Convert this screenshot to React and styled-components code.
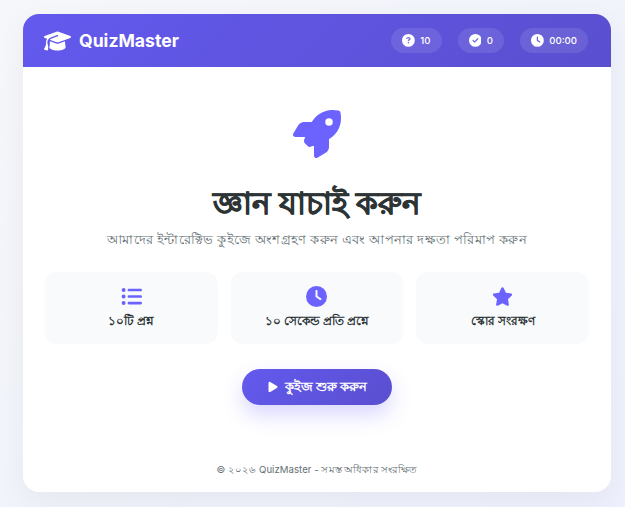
import React from "react";
import styled, { createGlobalStyle } from "styled-components";
import { FaGraduationCap, FaCircleQuestion, FaCircleCheck, FaClock, FaRocket, FaListUl, FaStar, FaPlay } from "react-icons/fa6";

const Global = createGlobalStyle`
  html, body { margin: 0; padding: 0; }
  body {
    font-family: Inter, "Noto Sans", sans-serif;
    background: linear-gradient(135deg, #f5f7fa 0%, #eef0fd 100%);
    min-height: 507px;
  }
  * { box-sizing: border-box; }
`;

const Page = styled.div`
  height: 507px;
  padding: 14px 14px 15px 23px;
  overflow: hidden;
`;
const Card = styled.div`
  width: 588px;
  height: 478px;
  background: #fff;
  border-radius: 16px;
  overflow: hidden;
  box-shadow: 0 10px 30px rgba(0, 0, 0, 0.05);
  display: flex;
  flex-direction: column;
`;
const Header = styled.header`
  height: 53px;
  flex: none;
  background: linear-gradient(135deg, #6359ee, #5a4fcf);
  color: #fff;
  display: flex;
  align-items: center;
  justify-content: space-between;
  padding: 0 23px 0 21px;
`;
const Logo = styled.div`
  display: flex;
  align-items: center;
  gap: 8px;
  font-size: 17.6px;
  font-weight: 700;
  svg { font-size: 26px; width: 27px; }
`;
const Stats = styled.div`
  display: flex;
  gap: 16px;
`;
const Stat = styled.div`
  display: flex;
  align-items: center;
  gap: 5.5px;
  height: 25px;
  padding: 0 11px;
  border-radius: 13px;
  background: rgba(255, 255, 255, 0.1);
  font-size: 9.6px;
  font-weight: 500;
  svg { font-size: 12.8px; }
`;
const Main = styled.main`
  flex: 1;
  display: flex;
  flex-direction: column;
  align-items: center;
  padding: 43px 22px 0;
`;
const Hero = styled.div`
  color: #6c63ff;
  font-size: 48px;
  line-height: 48px;
  height: 48px;
  display: flex;
`;
const Title = styled.h1`
  margin: 27px 0 0;
  font-size: 31px;
  line-height: 36px;
  font-weight: 700;
  letter-spacing: 0.2px;
  -webkit-text-stroke: 0.5px #2d3436;
  color: #2d3436;
`;
const Sub = styled.p`
  margin: 8px 0 0;
  font-size: 13px;
  line-height: 20px;
  letter-spacing: 0.27px;
  color: #636e72;
`;
const Features = styled.div`
  display: grid;
  grid-template-columns: repeat(3, 1fr);
  gap: 13px;
  width: 100%;
  margin-top: 23px;
`;
const Feature = styled.div`
  height: 72px;
  border-radius: 12px;
  background: #f8fafc;
  display: flex;
  flex-direction: column;
  align-items: center;
  padding-top: 14px;
  font-size: 11.5px;
  line-height: 16px;
  font-weight: 600;
  color: #2d3436;
  svg { font-size: 21px; color: #6c63ff; margin-bottom: 6px; }
`;
const Start = styled.button`
  margin-top: 25px;
  width: 150px;
  height: 36px;
  border: 0;
  border-radius: 18px;
  background: linear-gradient(135deg, #6359ee, #5a4fcf);
  color: #fff;
  font: 600 13px Inter, sans-serif;
  display: flex;
  align-items: center;
  justify-content: center;
  gap: 6px;
  box-shadow: 0 10px 20px rgba(108, 99, 255, 0.25);
  svg { font-size: 12px; }
`;
const Footer = styled.footer`
  margin-top: auto;
  padding-bottom: 14px;
  font-size: 9.6px;
  line-height: 16px;
  letter-spacing: 0.05px;
  color: #636e72;
`;

export default function App() {
  return (
    <Page>
      <Global />
      <Card>
        <Header>
          <Logo><FaGraduationCap /><span>QuizMaster</span></Logo>
          <Stats>
            <Stat><FaCircleQuestion /><span>10</span></Stat>
            <Stat><FaCircleCheck /><span>0</span></Stat>
            <Stat><FaClock /><span>00:00</span></Stat>
          </Stats>
        </Header>
        <Main>
          <Hero><FaRocket /></Hero>
          <Title>জ্ঞান যাচাই করুন</Title>
          <Sub>আমাদের ইন্টারেক্টিভ কুইজে অংশগ্রহণ করুন এবং আপনার দক্ষতা পরিমাপ করুন</Sub>
          <Features>
            <Feature><FaListUl /><span>১০টি প্রশ্ন</span></Feature>
            <Feature><FaClock /><span>১০ সেকেন্ড প্রতি প্রশ্নে</span></Feature>
            <Feature><FaStar /><span>স্কোর সংরক্ষণ</span></Feature>
          </Features>
          <Start><FaPlay /><span>কুইজ শুরু করুন</span></Start>
          <Footer>© ২০২৬ QuizMaster - সমস্ত অধিকার সংরক্ষিত</Footer>
        </Main>
      </Card>
    </Page>
  );
}
